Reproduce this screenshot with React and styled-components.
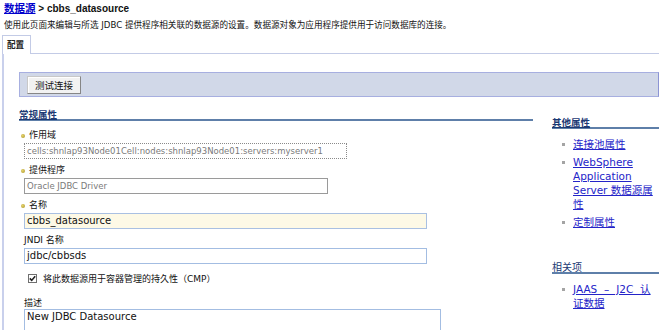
import React from "react";
import styled, { createGlobalStyle } from "styled-components";

const Global = createGlobalStyle`
  html, body { margin: 0; padding: 0; background: #fff; }
  body {
    width: 663px;
    height: 330px;
    overflow: hidden;
    font-family: "DejaVu Sans", "Noto Sans CJK SC", sans-serif;
    color: #000;
  }
`;

const Page = styled.div`
  height: 329px;
  padding-top: 1px;
  overflow: hidden;
`;

const Breadcrumb = styled.div`
  padding-left: 4px;
  font-family: "Liberation Sans", "Noto Sans CJK SC", sans-serif;
  font-size: 10px;
  font-weight: bold;
  line-height: 15px;
  color: #111;
`;

const CrumbLink = styled.a`
  font-size: 10.5px;
  color: #0000cc;
  text-decoration: underline;
`;

const Intro = styled.div`
  margin-top: 2px;
  padding-left: 4px;
  font-size: 8.6px;
  line-height: 14px;
  color: #111;
  white-space: nowrap;
`;

const TabStrip = styled.div`
  display: flex;
  margin-top: 3px;
  margin-left: 2px;
  width: 657px;
`;

const Tab = styled.div`
  height: 18px;
  padding: 0 6px 0 4px;
  border: 1px solid #c3cbe6;
  border-bottom: none;
  font-size: 8.6px;
  font-weight: bold;
  line-height: 19px;
  color: #222;
  background: #fff;
`;

const TabFill = styled.div`
  flex: 1;
  border-bottom: 1px solid #c3cbe6;
`;

const Panel = styled.div`
  margin-left: 2px;
  border-left: 2px solid #c9d0ec;
  padding: 18px 0 0 15px;
  width: 640px;
`;

const Toolbar = styled.div`
  display: flex;
  align-items: center;
  height: 23px;
  padding-left: 7px;
  background: #d1d8e8;
  border: 1px solid #a7afe0;
  border-right-color: #8c94d4;
`;

const Button = styled.button`
  height: 18px;
  padding: 0 7px;
  margin: 0;
  font-family: "Noto Sans CJK SC", sans-serif;
  font-size: 9.5px;
  line-height: 16px;
  color: #111;
  background: #f2f2f2;
  border: 1px solid #868686;
  border-top-color: #c8c8c8;
  border-left-color: #c8c8c8;
  box-shadow: inset 1px 1px 0 #fff;
`;

const Columns = styled.div`
  display: grid;
  grid-template-columns: 514px 107px;
  column-gap: 19px;
  align-items: start;
`;

const Column = styled.div`
  padding-top: ${(p) => p.$top}px;
`;

const Heading = styled.div`
  font-family: "Noto Sans CJK SC", sans-serif;
  font-size: ${(p) => (p.$bold ? 9.5 : 10)}px;
  font-weight: ${(p) => (p.$bold ? 700 : 400)};
  line-height: 10px;
  color: #1c3a74;
  border-bottom: 2px solid #5e7fa9;
  span {
    text-decoration: ${(p) => (p.$bold ? "underline" : "none")};
  }
`;

const Field = styled.div`
  margin-top: ${(p) => p.$gap}px;
`;

const Label = styled.div`
  display: flex;
  align-items: center;
  height: 13px;
  margin-bottom: 1px;
  padding-left: ${(p) => (p.$required ? 2 : 5)}px;
  font-size: 9px;
  line-height: 13px;
  color: #111;
`;

const Req = styled.span`
  width: 4px;
  height: 4px;
  margin-right: 4px;
  border-radius: 50%;
  background: radial-gradient(circle at 40% 40%, #e6d46a, #a8922a);
`;

const Input = styled.div`
  box-sizing: border-box;
  width: ${(p) => p.$w}px;
  height: ${(p) => p.$h || 16}px;
  margin-left: 5px;
  padding: 0 2px;
  font-size: ${(p) => (p.$readonly ? 8.5 : 10)}px;
  line-height: 14px;
  white-space: nowrap;
  overflow: hidden;
  color: ${(p) => (p.$readonly ? "#7a7a7a" : "#111")};
  background: ${(p) => p.$bg || "#fff"};
  border: 1px ${(p) => p.$style || "solid"} ${(p) => p.$border || "#a3bde2"};
`;

const CheckRow = styled.label`
  display: flex;
  align-items: center;
  height: 14px;
  margin-top: 7px;
  padding-left: 9px;
  font-size: 9px;
  color: #111;
`;

const Box = styled.span`
  display: inline-flex;
  align-items: center;
  justify-content: center;
  box-sizing: border-box;
  width: 9px;
  height: 9px;
  margin-right: 6px;
  border: 1px solid #6f6f6f;
  background: #fff;
`;

const DescLabel = styled(Label)`
  height: 11px;
  line-height: 11px;
  margin-top: 13px;
  margin-bottom: 0;
`;

const LinkList = styled.ul`
  list-style: none;
  margin: 8px 0 0;
  padding: 0;
`;

const Item = styled.li`
  display: flex;
  align-items: flex-start;
  margin-bottom: 4px;
  font-size: 10.5px;
  line-height: 14px;
`;

const Square = styled.span`
  flex: none;
  width: 3px;
  height: 3px;
  margin: 6px 8px 0 10px;
  background: #a4a4a4;
`;

const ItemLink = styled.a`
  width: 86px;
  color: #2424c8;
  text-decoration: underline;
  word-spacing: ${(p) => p.$ws || 0}px;
`;

const Spacer = styled.div`
  height: 29px;
`;

export default function App() {
  return (
    <>
      <Global />
      <Page>
        <Breadcrumb>
          <CrumbLink href="#">数据源</CrumbLink> &gt; cbbs_datasource
        </Breadcrumb>
        <Intro>
          使用此页面来编辑与所选 JDBC 提供程序相关联的数据源的设置。数据源对象为应用程序提供用于访问数据库的连接。
        </Intro>
        <TabStrip>
          <Tab>配置</Tab>
          <TabFill />
        </TabStrip>
        <Panel>
          <Toolbar>
            <Button>测试连接</Button>
          </Toolbar>
          <Columns>
            <Column $top={12}>
              <Heading $bold>
                <span>常规属性</span>
              </Heading>
              <Field $gap={8}>
                <Label $required>
                  <Req />
                  作用域
                </Label>
                <Input $w={323} $readonly $style="dotted" $border="#8a8a8a">
                  cells:shnlap93Node01Cell:nodes:shnlap93Node01:servers:myserver1
                </Input>
              </Field>
              <Field $gap={5}>
                <Label $required>
                  <Req />
                  提供程序
                </Label>
                <Input $w={304} $readonly $border="#9a9a9a">
                  Oracle JDBC Driver
                </Input>
              </Field>
              <Field $gap={5}>
                <Label $required>
                  <Req />
                  名称
                </Label>
                <Input $w={403} $bg="#fdf9e6" $border="#a9c0e2">
                  cbbs_datasource
                </Input>
              </Field>
              <Field $gap={5}>
                <Label>JNDI 名称</Label>
                <Input $w={403}>jdbc/cbbsds</Input>
              </Field>
              <CheckRow>
                <Box>
                  <svg width="7" height="7" viewBox="0 0 7 7">
                    <path d="M0.8 3.4 L2.7 5.4 L6.2 1.2" fill="none" stroke="#222" strokeWidth="1.6" />
                  </svg>
                </Box>
                将此数据源用于容器管理的持久性（CMP）
              </CheckRow>
              <DescLabel>描述</DescLabel>
              <Input $w={417} $h={24}>
                New JDBC Datasource
              </Input>
            </Column>
            <Column $top={20}>
              <Heading $bold>
                <span>其他属性</span>
              </Heading>
              <LinkList>
                <Item>
                  <Square />
                  <ItemLink href="#">连接池属性</ItemLink>
                </Item>
                <Item>
                  <Square />
                  <ItemLink href="#">WebSphere Application Server 数据源属性</ItemLink>
                </Item>
                <Item>
                  <Square />
                  <ItemLink href="#">定制属性</ItemLink>
                </Item>
              </LinkList>
              <Spacer />
              <Heading>
                <span>相关项</span>
              </Heading>
              <LinkList>
                <Item>
                  <Square />
                  <ItemLink href="#" $ws={3.5}>
                    JAAS – J2C 认证数据
                  </ItemLink>
                </Item>
              </LinkList>
            </Column>
          </Columns>
        </Panel>
      </Page>
    </>
  );
}
